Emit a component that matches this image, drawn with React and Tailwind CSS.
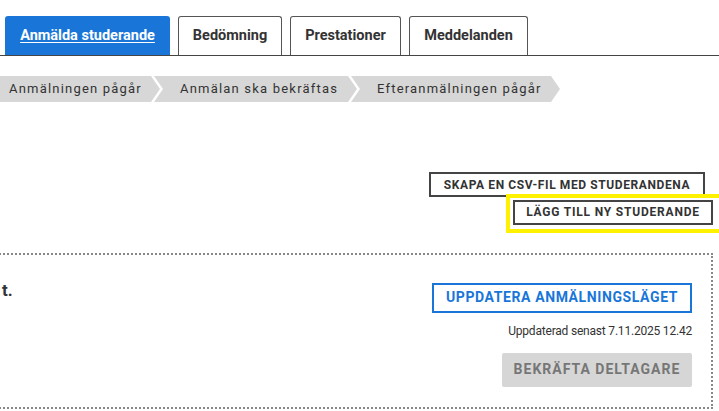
import React from 'react';

// ── Flikar och faser ──────────────────────────────────────────────────────────

const TABS = [
  { id: 'anmalda', label: 'Anmälda studerande', w: 'w-[165px]', active: true },
  { id: 'bedomning', label: 'Bedömning', w: 'w-[104px]' },
  { id: 'prestationer', label: 'Prestationer', w: 'w-[111px]' },
  { id: 'meddelanden', label: 'Meddelanden', w: 'w-[119px]' },
];

const PHASES = [
  { id: 'p1', label: 'Anmälningen pågår', w: 'w-[160px]', first: true },
  { id: 'p2', label: 'Anmälan ska bekräftas', w: 'w-[203px]' },
  { id: 'p3', label: 'Efteranmälningen pågår', w: 'w-[209px]' },
];

const FONT = "font-['Roboto','Liberation_Sans',sans-serif]";

function Tab({ tab }) {
  if (tab.active) {
    return (
      <button
        className={`${tab.w} h-[39px] rounded-t-[3px] bg-[#1976d8] text-white text-[14.5px] font-bold underline underline-offset-2`}
      >
        {tab.label}
      </button>
    );
  }
  return (
    <button
      className={`${tab.w} h-[39px] rounded-t-[3px] border border-b-0 border-[#555] bg-white text-[#333] text-[14.5px] font-bold`}
    >
      {tab.label}
    </button>
  );
}

function Phase({ phase }) {
  const clip = phase.first
    ? '[clip-path:polygon(0_0,calc(100%-9px)_0,100%_50%,calc(100%-9px)_100%,0_100%)]'
    : '[clip-path:polygon(0_0,calc(100%-9px)_0,100%_50%,calc(100%-9px)_100%,0_100%,9px_50%)]';
  return (
    <div
      className={`${phase.w} ${clip} h-[26px] bg-[#d7d7d7] flex items-center text-[13px] tracking-[1.2px] text-[#333] ${
        phase.first ? 'pl-[9px]' : 'pl-[26px]'
      }`}
    >
      {phase.label}
    </div>
  );
}

export default function App() {
  return (
    <div className={`${FONT} w-[719px] h-[411px] overflow-hidden bg-white text-[#333]`}>
      {/* Flikar */}
      <div className="pt-[16px] border-b border-[#444]">
        <div className="flex gap-2 pl-[5px]">
          {TABS.map(t => (
            <Tab key={t.id} tab={t} />
          ))}
        </div>
      </div>

      {/* Faser */}
      <div className="mt-[20px] flex -space-x-[6px]">
        {PHASES.map(p => (
          <Phase key={p.id} phase={p} />
        ))}
      </div>

      {/* Åtgärder */}
      <div className="mt-[70px] pr-[6px] flex flex-col items-end">
        <button className="mr-[8px] h-[25px] w-[276px] border-2 border-[#444] text-[12px] font-bold tracking-[0.6px] text-[#333]">
          SKAPA EN CSV-FIL MED STUDERANDENA
        </button>
        <div className="relative mt-[2px]">
          <span className="absolute -left-[7px] -top-[5px] -bottom-[8px] -right-[20px] border-4 border-[#fff200] pointer-events-none" />
          <button className="relative h-[25px] w-[200px] border-2 border-[#444] text-[12px] font-bold tracking-[0.8px] text-[#333]">
            LÄGG TILL NY STUDERANDE
          </button>
        </div>
      </div>

      {/* Anmälningsläge */}
      <div className="mt-[28px] mr-[6px] -ml-[10px] h-[156px] border-2 border-dotted border-[#888] flex justify-between pl-[10px] pr-[19px]">
        <h2 className="mt-[23px] text-[17px] font-bold text-[#333]">t.</h2>
        <div className="mt-[28px] flex flex-col items-end">
          <button className="w-[260px] h-[30px] border-2 border-[#1976d8] text-[#1976d8] text-[14px] font-bold tracking-[0.6px]">
            UPPDATERA ANMÄLNINGSLÄGET
          </button>
          <p className="mt-[9px] text-[12px] tracking-[-0.2px] text-[#333]">Uppdaterad senast 7.11.2025 12.42</p>
          <button
            disabled
            className="mt-[13px] w-[190px] h-[34px] rounded-[2px] bg-[#d6d6d6] text-[#767676] text-[14px] font-bold tracking-[1px]"
          >
            BEKRÄFTA DELTAGARE
          </button>
        </div>
      </div>
    </div>
  );
}
